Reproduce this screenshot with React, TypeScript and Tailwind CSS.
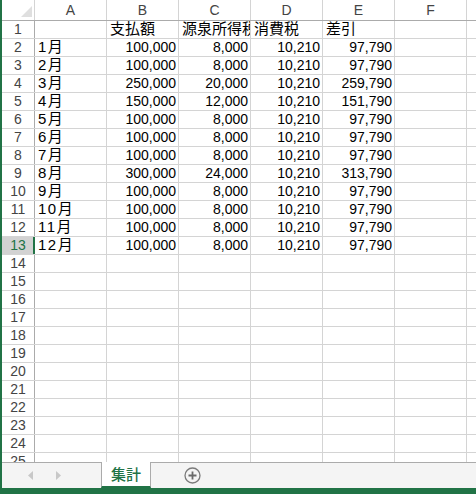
import React from "react";

const COLS = ["A", "B", "C", "D", "E", "F"];

const DATA: string[][] = [
  ["", "支払額", "源泉所得税", "消費税", "差引"],
  ["1月", "100,000", "8,000", "10,210", "97,790"],
  ["2月", "100,000", "8,000", "10,210", "97,790"],
  ["3月", "250,000", "20,000", "10,210", "259,790"],
  ["4月", "150,000", "12,000", "10,210", "151,790"],
  ["5月", "100,000", "8,000", "10,210", "97,790"],
  ["6月", "100,000", "8,000", "10,210", "97,790"],
  ["7月", "100,000", "8,000", "10,210", "97,790"],
  ["8月", "300,000", "24,000", "10,210", "313,790"],
  ["9月", "100,000", "8,000", "10,210", "97,790"],
  ["10月", "100,000", "8,000", "10,210", "97,790"],
  ["11月", "100,000", "8,000", "10,210", "97,790"],
  ["12月", "100,000", "8,000", "10,210", "97,790"],
];

const ROW_COUNT = 25;
const SELECTED_ROW = 13;

function Cell({ value, first }: { value: string; first: boolean }) {
  const numeric = !first && /^[\d,]+$/.test(value);
  return (
    <div
      className={`flex h-full w-[72px] shrink-0 items-center overflow-hidden whitespace-nowrap border-r border-[#d4d4d4] ${
        numeric ? "justify-end pr-[2px]" : "justify-start pl-[3px]"
      }`}
    >
      {numeric ? (
        <span className="text-[14px] text-black [font-family:'Liberation_Sans',sans-serif]">{value}</span>
      ) : (
        <span
          className={`text-[15px] text-black [font-family:'Liberation_Sans','Noto_Sans_CJK_JP',sans-serif] ${
            first ? "tracking-[1.5px]" : ""
          }`}
        >
          {value}
        </span>
      )}
    </div>
  );
}

function Row({ n }: { n: number }) {
  const values = DATA[n - 1] ?? [];
  const selected = n === SELECTED_ROW;
  return (
    <div className="flex h-[18px] shrink-0 border-b border-[#d4d4d4]">
      <div
        className={`flex h-full w-[33px] shrink-0 items-center justify-center text-[14px] [font-family:'Liberation_Sans',sans-serif] ${
          selected
            ? "border-r-2 border-[#217346] bg-[#d2d2d2] pl-px text-[#217346]"
            : "border-r border-[#ababab] text-[#444]"
        }`}
      >
        {n}
      </div>
      {COLS.map((c, i) => (
        <Cell key={c} value={values[i] ?? ""} first={i === 0} />
      ))}
      <div className="h-full flex-1" />
    </div>
  );
}

function Arrow({ dir }: { dir: "left" | "right" }) {
  return (
    <svg width="5" height="9" viewBox="0 0 5 9" className="shrink-0">
      {dir === "left" ? (
        <polygon points="5,0 0,4.5 5,9" fill="#c8c8c8" />
      ) : (
        <polygon points="0,0 5,4.5 0,9" fill="#c8c8c8" />
      )}
    </svg>
  );
}

export default function App() {
  return (
    <div className="flex h-[494px] w-[476px] flex-col overflow-hidden bg-white">
      <div className="flex min-h-0 flex-1 flex-col border-l-2 border-[#217346]">
        <div className="flex h-[462px] shrink-0 flex-col overflow-hidden">
          {/* column headers */}
          <div className="flex h-[21px] shrink-0 border-b border-[#ababab]">
            <div className="relative h-full w-[33px] shrink-0 border-r border-[#d4d4d4]">
              <svg width="11" height="11" viewBox="0 0 11 11" className="absolute bottom-[3px] right-[2px]">
                <polygon points="11,0 11,11 0,11" fill="#dfdfdf" />
              </svg>
            </div>
            {COLS.map((c) => (
              <div
                key={c}
                className="flex h-full w-[72px] shrink-0 items-center justify-center border-r border-[#d4d4d4] text-[14px] text-[#444] [font-family:'Liberation_Sans',sans-serif]"
              >
                {c}
              </div>
            ))}
            <div className="h-full flex-1" />
          </div>
          {Array.from({ length: ROW_COUNT }, (_, i) => (
            <Row key={i} n={i + 1} />
          ))}
        </div>
        {/* sheet tabs */}
        <div className="flex flex-1 items-center border-t border-[#ababab] bg-[#f4f4f4]">
          <div className="ml-[26px] flex items-center gap-[23px]">
            <Arrow dir="left" />
            <Arrow dir="right" />
          </div>
          <div className="-mt-px ml-[40px] flex h-[calc(100%+1px)] w-[50px] items-center justify-center self-start border-x border-b-2 border-x-[#ababab] border-b-[#217346] bg-white text-[15px] font-medium text-[#217346] [font-family:'Noto_Sans_CJK_JP',sans-serif]">
            集計
          </div>
          <svg width="17" height="17" viewBox="0 0 17 17" className="ml-[33px]">
            <circle cx="8.5" cy="8.5" r="7.5" fill="none" stroke="#7a7a7a" strokeWidth="1.3" />
            <path d="M8.5 4.5v8M4.5 8.5h8" stroke="#6a6a6a" strokeWidth="1.8" />
          </svg>
        </div>
      </div>
      <div className="h-[6px] shrink-0 bg-[#217346]" />
    </div>
  );
}
